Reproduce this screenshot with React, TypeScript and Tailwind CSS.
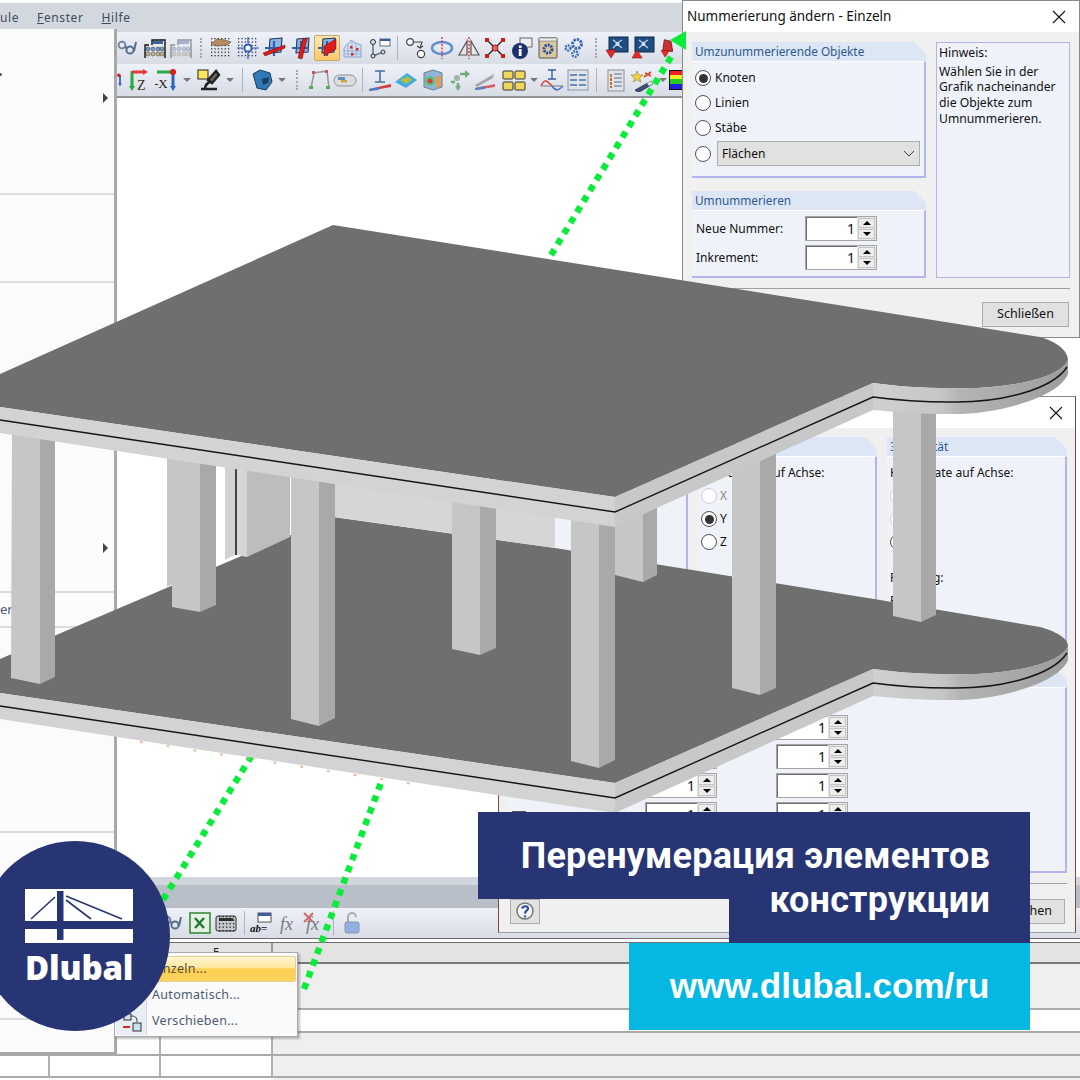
import React from 'react';

const UI = "font-['Noto_Sans',sans-serif]";

const Svg = ({ children }: { children: React.ReactNode }) => (
  <svg width="24" height="24" viewBox="0 0 24 24" fill="none">
    {children}
  </svg>
);

const dots = (from: number, to: number, step: number, fill: string) => {
  const out: React.ReactNode[] = [];
  for (let x = from; x <= to; x += step)
    for (let y = from; y <= to; y += step)
      out.push(<rect key={`${x}-${y}`} x={x} y={y} width="1.3" height="1.3" fill={fill} />);
  return out;
};

const Chain = () => (
  <Svg>
    <circle cx="6" cy="9" r="3.4" stroke="#6b7f93" strokeWidth="1.8" />
    <circle cx="14" cy="14" r="3.6" stroke="#54708c" strokeWidth="2" />
    <path d="M9 11l2 1M20 6l-2 9" stroke="#54708c" strokeWidth="2" />
  </Svg>
);
const Abacus = ({ faded }: { faded?: boolean }) => (
  <Svg>
    <g opacity={faded ? 0.4 : 1}>
      <path d="M2 22V9h4M22 22V4H9v5" stroke="#111" strokeWidth="1.4" />
      <rect x="10" y="5" width="10" height="3" fill="#3c62a0" />
      {[5, 10, 15, 19].map((x) => (
        <circle key={x} cx={x} cy="13" r="2" fill="#7b97c4" stroke="#333" strokeWidth="0.5" />
      ))}
      {[5, 10, 15, 19].map((x) => (
        <circle key={x} cx={x} cy="18" r="2" fill="#c9b98a" stroke="#333" strokeWidth="0.5" />
      ))}
    </g>
  </Svg>
);
const GridHand = () => (
  <Svg>
    {dots(2, 22, 3.4, '#333')}
    <path d="M2 8l6-5 8 1 6 2-4 3-10 1z" fill="#b98d63" stroke="#5d4630" strokeWidth="0.6" />
  </Svg>
);
const GridNode = () => (
  <Svg>
    {dots(2, 22, 3.4, '#2c3d66')}
    <circle cx="12" cy="12" r="3.6" stroke="#2b5bb0" strokeWidth="2" fill="#fff" />
    <path d="M1 12h6M17 12h6M12 1v6M12 17v6" stroke="#2b5bb0" strokeWidth="1.2" />
  </Svg>
);
const Plane = ({ k }: { k: number }) => (
  <Svg>
    <path d="M8 3l12-1-1 14-12 1z" fill="#8db4e2" stroke="#1d3557" strokeWidth="1.1" />
    <path d="M3 12h16M12 20V5" stroke="#2d62a8" strokeWidth="2.2" />
    {k === 0 && <path d="M1 17l22-8v3L3 20z" fill="#e01b1b" stroke="#5e0d0d" strokeWidth="0.5" />}
    {k === 1 && <path d="M9 22l5-20 4 1-5 20z" fill="#e01b1b" stroke="#5e0d0d" strokeWidth="0.5" />}
    {k === 2 && <path d="M9 10l12-7v10L9 20z" fill="#e01b1b" stroke="#5e0d0d" strokeWidth="0.5" />}
  </Svg>
);
const ActivePlane = () => (
  <span className="flex h-[26px] w-[26px] items-center justify-center rounded-[2px] border border-[#c9a86a] bg-gradient-to-b from-[#ffe9b0] to-[#ffc766]">
    <Plane k={2} />
  </span>
);
const RedGrid = () => (
  <Svg>
    <path d="M3 21V12l7-8 5 3 5 2v12z" fill="#cfe0f2" stroke="#7d9bc0" strokeWidth="0.8" />
    <path d="M3 15h17M3 18h17M7 8v13M11 5v16M15 7v14" stroke="#7d9bc0" strokeWidth="0.6" />
    <rect x="9" y="10" width="2.5" height="2.5" fill="#d22" />
    <rect x="15" y="12" width="2.5" height="2.5" fill="#d22" />
    <rect x="10" y="17" width="2.5" height="2.5" fill="#d22" />
  </Svg>
);
const NodeWin = () => (
  <Svg>
    <rect x="12" y="3" width="10" height="7" fill="#fff" stroke="#5c6a7a" />
    <rect x="12" y="3" width="10" height="2" fill="#3a5f92" />
    <path d="M5 9v11M5 20l10-4" stroke="#5e7892" strokeWidth="1.5" />
    <circle cx="5" cy="6" r="2.5" stroke="#333" fill="#cfe0f2" />
    <circle cx="5" cy="20" r="2" stroke="#333" fill="#cfe0f2" />
    <circle cx="15" cy="16" r="2" stroke="#333" fill="#cfe0f2" />
  </Svg>
);
const MoveNodes = () => (
  <Svg>
    <circle cx="6" cy="6" r="3.4" stroke="#444" strokeWidth="1.2" fill="#fff" />
    <circle cx="17" cy="18" r="3.6" stroke="#444" strokeWidth="1.2" fill="#fff" />
    <path d="M10 6h8l-2 6M13 10l3 2 3-2" stroke="#444" strokeWidth="1.1" />
  </Svg>
);
const RotEllipse = () => (
  <Svg>
    <ellipse cx="12" cy="12" rx="10" ry="6" stroke="#5b8fcf" strokeWidth="2.4" />
    <path d="M12 1v22" stroke="#e11" strokeWidth="1.2" strokeDasharray="2 1.5" />
  </Svg>
);
const Mirror = () => (
  <Svg>
    <path d="M10 5v14H2zM14 5v14h8z" stroke="#555" strokeWidth="1.2" fill="#e8e8e8" />
    <path d="M12 1v22" stroke="#e11" strokeWidth="1.2" strokeDasharray="2 1.5" />
  </Svg>
);
const RedX = () => (
  <Svg>
    <path d="M4 4l16 16M20 4L4 20" stroke="#222" strokeWidth="1.4" />
    {[
      [2, 2],
      [18, 2],
      [2, 18],
      [18, 18],
    ].map(([x, y]) => (
      <rect key={`${x}${y}`} x={x} y={y} width="4" height="4" fill="#d61a1a" />
    ))}
    <circle cx="12" cy="12" r="3" fill="#d66" stroke="#a11" />
  </Svg>
);
const Info = () => (
  <Svg>
    <rect x="10" y="2" width="12" height="9" fill="#eee" stroke="#666" />
    <circle cx="10" cy="15" r="8" fill="#1b2f6e" />
    <rect x="8.8" y="13" width="2.8" height="7" fill="#fff" />
    <rect x="8.8" y="9.5" width="2.8" height="2.4" fill="#fff" />
  </Svg>
);
const GearWin = () => (
  <Svg>
    <rect x="3" y="2" width="18" height="20" rx="1" fill="#d9c7a2" stroke="#555" />
    <rect x="3" y="2" width="18" height="3" fill="#eee" stroke="#555" strokeWidth="0.5" />
    <circle cx="12" cy="13" r="4" stroke="#2b4c96" strokeWidth="3" strokeDasharray="2 1" />
  </Svg>
);
const Gears = () => (
  <Svg>
    <circle cx="15" cy="8" r="4.5" stroke="#3f6bb5" strokeWidth="3" strokeDasharray="2.4 1" />
    <circle cx="6" cy="12" r="2.5" stroke="#3f6bb5" strokeWidth="2.4" strokeDasharray="1.8 1" />
    <circle cx="13" cy="18" r="2.8" stroke="#3f6bb5" strokeWidth="2.4" strokeDasharray="1.8 1" />
  </Svg>
);
const BlueTri = ({ up }: { up?: boolean }) => (
  <Svg>
    <rect x="4" y="1" width="19" height="15" fill="#1f4d80" stroke="#0e2a4a" />
    <path d="M8 4l4 3 5-3M8 12l4-4 5 4" stroke="#bcd7f0" strokeWidth="1.2" />
    <circle cx="12.5" cy="8" r="2" fill="#cfe3f6" />
    <path d={up ? 'M6 14l5 8H1z' : 'M1 14h10l-5 8z'} fill="#e8262a" stroke="#7a1414" strokeWidth="0.6" />
  </Svg>
);
const RedTri = () => (
  <Svg>
    <path d="M10 2l8 2 2 12H8z" fill="#c83232" stroke="#6d1818" />
    <path d="M6 15h10l-5 8z" fill="#e8262a" stroke="#7a1414" strokeWidth="0.6" />
  </Svg>
);
const AxisZ = ({ label }: { label: string }) => (
  <Svg>
    <path d="M4 3v17" stroke="#28a745" strokeWidth="3" />
    <path d="M1 18l3 5 3-5z" fill="#28a745" />
    <path d="M4 4h12" stroke="#e23a3a" strokeWidth="3" />
    <path d="M15 1l5 3-5 3z" fill="#e23a3a" />
    <text x="9" y="22" fontFamily="Liberation Serif" fontSize="14" fill="#333">
      {label}
    </text>
  </Svg>
);
const AxisX = () => (
  <Svg>
    <text x="-1" y="20" fontFamily="Liberation Serif" fontSize="13" fill="#222">
      -X
    </text>
    <path d="M2 4h14" stroke="#28a745" strokeWidth="3" />
    <path d="M18 4v15" stroke="#2a62c8" strokeWidth="3" />
    <path d="M15 18l3 5 3-5z" fill="#2a62c8" />
    <circle cx="18" cy="4" r="3" fill="#d82020" />
  </Svg>
);
const AxisBlue = () => (
  <Svg>
    <path d="M12 3v17" stroke="#2a62c8" strokeWidth="3" />
    <path d="M9 18l3 5 3-5z" fill="#2a62c8" />
    <circle cx="10" cy="4" r="3" fill="#d82020" />
  </Svg>
);
const Scope = () => (
  <Svg>
    <rect x="1" y="2" width="10" height="9" fill="#ffe85c" stroke="#222" />
    <path d="M19 3l-8 9 4 3 7-8zM4 21h16M8 21c0-4 2-6 5-7" stroke="#222" strokeWidth="2.4" fill="#666" />
  </Svg>
);
const Block = () => (
  <Svg>
    <path d="M3 6l7-4 10 3 2 9-6 8-9-2z" fill="#2f79b6" stroke="#173e60" />
    <path d="M12 11l7-2-1 6-5 2z" fill="#173e60" />
  </Svg>
);
const Frame = () => (
  <Svg>
    <path d="M4 20L7 5l13-2 2 17" stroke="#9b9b9b" strokeWidth="1.6" />
    <rect x="2" y="18" width="4" height="3" fill="#57a85f" />
    <rect x="19" y="18" width="4" height="3" fill="#57a85f" />
    <rect x="5" y="3" width="3" height="3" fill="#c55" />
    <rect x="18" y="2" width="3" height="3" fill="#c55" />
  </Svg>
);
const Pill = () => (
  <Svg>
    <rect x="1" y="7" width="22" height="11" rx="5.5" fill="#dcdcdc" stroke="#8f8f8f" />
    <rect x="5" y="9" width="7" height="3" fill="#5d8cc4" />
    <rect x="8" y="12" width="6" height="2.4" fill="#c9a24a" />
  </Svg>
);
const IBeam = () => (
  <Svg>
    <path d="M7 3h10M12 3v11M7 14h10" stroke="#4a6ea8" strokeWidth="1.6" />
    <path d="M1 21l22-5v3L1 23z" fill="#d23c3c" />
    <path d="M1 21l10-2v3L1 23z" fill="#4a7fd0" />
  </Svg>
);
const Rainbow = () => (
  <Svg>
    <path d="M1 14L13 5l10 7-11 8z" fill="#4aa8e0" />
    <path d="M6 12l7-4 6 4-7 4z" fill="#7ccf5b" />
    <path d="M9 12l4-2 3 2-4 2z" fill="#f2a33a" />
  </Svg>
);
const ColorCube = () => (
  <Svg>
    <path d="M3 5l9-3 9 3v14l-9 3-9-3z" fill="#8fb5d8" stroke="#6f7f8f" />
    <circle cx="9" cy="13" r="5" fill="#5fc07a" />
    <circle cx="9" cy="13" r="2.5" fill="#d63a3a" />
    <path d="M15 9l5-2v11l-5 2z" fill="#e0a050" />
  </Svg>
);
const GreenArrows = () => (
  <Svg>
    <circle cx="10" cy="10" r="3" fill="#9fb5a5" />
    <path d="M13 6h6M8 14H4M11 15v6" stroke="#6fae7c" strokeWidth="2.6" />
    <path d="M18 2l5 4-5 4zM8 18l3 5 3-5z" fill="#6fae7c" />
  </Svg>
);
const Plates = () => (
  <Svg>
    <path d="M2 17l19-11-1 4L4 19z" fill="#a7a7a7" />
    <path d="M2 20l20-4v3L2 22z" fill="#d86060" />
    <path d="M2 20l10-2v3L2 22z" fill="#5b7fc4" />
  </Svg>
);
const Yellows = () => (
  <Svg>
    {[
      [1, 3],
      [13, 3],
      [1, 14],
      [13, 14],
    ].map(([x, y]) => (
      <rect key={`${x}${y}`} x={x} y={y} width="10" height="8" rx="1" fill="#f2d65c" stroke="#333" />
    ))}
  </Svg>
);
const IBeamWave = () => (
  <Svg>
    <path d="M8 2h8M12 2v9M8 11h8" stroke="#3e5f9e" strokeWidth="1.4" />
    <path d="M1 18c4-9 7-4 11 0" stroke="#d44" strokeWidth="1.6" />
    <path d="M12 18c4 6 7 4 11 0" stroke="#3e6fd0" strokeWidth="1.6" />
    <path d="M1 18h22" stroke="#777" />
  </Svg>
);
const TableIco = () => (
  <Svg>
    <rect x="2" y="2" width="20" height="20" fill="#dfe3ea" stroke="#8d96a5" />
    <path d="M4 7h7M13 7h7M4 12h7M13 12h7M4 17h7M13 17h7" stroke="#4a70a8" strokeWidth="1.6" />
  </Svg>
);
const Doc = () => (
  <Svg>
    <rect x="4" y="2" width="16" height="21" fill="#e2e4e8" stroke="#8b8f96" />
    <path d="M7 6v14" stroke="#d06a2a" strokeWidth="2" strokeDasharray="3 1" />
    <path d="M10 6h8M10 10h8M10 14h8M10 18h8" stroke="#59708f" strokeWidth="1.2" />
  </Svg>
);
const StarPen = () => (
  <Svg>
    <path d="M6 3l1.7 4H12L8.6 10l1.2 4L6 11.6 2.3 14l1.2-4L0 7h4.3z" fill="#f0d53c" stroke="#7a6a1a" strokeWidth="0.5" />
    <path d="M14 5l6 3M20 4l-7 5" stroke="#d42" strokeWidth="1.6" />
    <path d="M4 22l16-9 2 3-15 9z" fill="#3b4f78" stroke="#111" strokeWidth="0.5" />
    <path d="M16 15l4-2 2 3-4 2z" fill="#ddd" />
  </Svg>
);
const RainbowBars = () => (
  <Svg>
    <rect x="0" y="2" width="24" height="20" fill="#111" />
    <rect x="1" y="3" width="22" height="4" fill="#e22" />
    <rect x="1" y="7" width="22" height="4" fill="#ee2" />
    <rect x="1" y="11" width="22" height="5" fill="#2c2" />
    <rect x="1" y="16" width="22" height="5" fill="#22d" />
  </Svg>
);
const Excel = () => (
  <Svg>
    <rect x="2" y="2" width="20" height="20" fill="#e4f2e4" stroke="#3c8a40" strokeWidth="1.6" />
    <path d="M7 7l9 10M16 7L7 17" stroke="#1f7a31" strokeWidth="2.4" />
  </Svg>
);
const Calc = () => (
  <Svg>
    <rect x="2" y="5" width="20" height="15" rx="2" fill="#c5c7cb" stroke="#333" />
    <rect x="5" y="7" width="14" height="3" fill="#333" />
    {dots(5, 19, 3.5, '#222')}
  </Svg>
);
const AbEq = () => (
  <Svg>
    <rect x="8" y="2" width="13" height="9" fill="#fff" stroke="#555" />
    <rect x="8" y="2" width="13" height="3" fill="#3e5f9e" />
    <text x="0" y="21" fontFamily="Liberation Serif" fontStyle="italic" fontWeight="700" fontSize="11" fill="#111">
      ab=
    </text>
  </Svg>
);
const Fx = ({ off }: { off?: boolean }) => (
  <Svg>
    <text x="3" y="19" fontFamily="Liberation Serif" fontStyle="italic" fontSize="18" fill="#77797e">
      fx
    </text>
    {off && <path d="M1 2l9 9M10 2l-9 9" stroke="#d76a6a" strokeWidth="2" />}
  </Svg>
);
const Lock = () => (
  <Svg>
    <path d="M8 11V6a4 4 0 018 0" stroke="#a8adb5" strokeWidth="2" />
    <rect x="5" y="11" width="14" height="11" rx="2" fill="#8fb0e0" stroke="#8a94a8" />
  </Svg>
);

const Caret = () => <span className="h-0 w-0 border-x-[4px] border-t-[4px] border-x-transparent border-t-[#777]" />;
const Sep = ({ w }: { w: string }) => (
  <span className={`flex justify-center ${w}`}>
    <span className="h-[24px] w-px bg-[#aeb3bc]" />
  </span>
);
const Grip = ({ w }: { w: string }) => (
  <span className={`flex justify-center ${w}`}>
    <span className="h-[20px] w-[2px] border-l-2 border-dotted border-[#a3a8b2]" />
  </span>
);
const Slot = ({ w = 'w-[26.4px]', children }: { w?: string; children: React.ReactNode }) => (
  <span className={`flex shrink-0 items-center justify-center ${w}`}>{children}</span>
);

const Toolbar = ({ className, children }: { className: string; children: React.ReactNode }) => (
  <div className={`flex shrink-0 items-center bg-gradient-to-b from-[#eef1f8] to-[#d8dce5] ${className}`}>
    {children}
  </div>
);

const Radio = ({ on, off }: { on?: boolean; off?: boolean }) => (
  <span
    className={`flex h-[16px] w-[16px] shrink-0 items-center justify-center rounded-full border-[1.5px] bg-white ${
      off ? 'border-[#cfcfcf]' : 'border-[#4f4f4f]'
    }`}
  >
    {on && <span className="h-[9px] w-[9px] rounded-full bg-[#333]" />}
  </span>
);

const Spinner = ({ className = '' }: { className?: string }) => (
  <div className={`flex h-[25px] w-[72px] shrink-0 border border-[#a6a6a6] bg-[#e6e6e6] ${className}`}>
    <div className="flex flex-1 items-center justify-end border-l border-t border-[#6f6f6f] bg-white pr-[2px] text-[14px] text-[#111]">
      1
    </div>
    <div className="flex w-[19px] flex-col gap-px p-px">
      <span className="flex flex-1 items-center justify-center border border-[#c4c4c4] bg-[#ececec]">
        <span className="h-0 w-0 border-x-[4px] border-b-[4px] border-x-transparent border-b-black" />
      </span>
      <span className="flex flex-1 items-center justify-center border border-[#c4c4c4] bg-[#ececec]">
        <span className="h-0 w-0 border-x-[4px] border-t-[4px] border-x-transparent border-t-black" />
      </span>
    </div>
  </div>
);

const Group = ({ title, className, children }: { title: string; className: string; children?: React.ReactNode }) => (
  <div className={`flex flex-col ${className}`}>
    <div className="flex h-[19px] shrink-0 items-center bg-[#dce6f4] pl-[3px] text-[11.8px] text-[#2f5a8c] [clip-path:polygon(0_0,calc(100%-12px)_0,100%_12px,100%_100%,0_100%)]">
      {title}
    </div>
    <div className="flex-1 border-b-2 border-r-2 border-t border-[#b3b3ee] border-t-white bg-[#eff3f9] text-[12px] leading-[16px] text-[#111]">
      {children}
    </div>
  </div>
);

const CloseX = () => (
  <svg width="14" height="14" viewBox="0 0 14 14" stroke="#111" strokeWidth="1.1">
    <path d="M1 1l12 12M13 1L1 13" />
  </svg>
);

const Btn = ({ className, children }: { className: string; children: React.ReactNode }) => (
  <div className={`flex h-[25px] items-center justify-center border border-[#adadad] bg-[#e1e1e1] text-[12.5px] text-[#111] ${className}`}>
    {children}
  </div>
);

const RenumberDialog = () => (
  <div className={`absolute left-[682px] top-0 flex h-[338px] w-[398px] flex-col border border-[#8a8a8a] bg-[#f0f0f0] ${UI}`}>
    <div className="flex h-[31px] shrink-0 items-center justify-between bg-white pl-[4px] pr-[13px] text-[13.5px] text-[#111]">
      <span>Nummerierung ändern - Einzeln</span>
      <CloseX />
    </div>
    <div className="flex gap-[10px] pl-[9px] pt-[10px]">
      <div className="flex w-[234px] flex-col gap-[13px]">
        <Group title="Umzunummerierende Objekte" className="h-[136px]">
          <div className="flex flex-col gap-[9px] pl-[3px] pt-[8px]">
            {['Knoten', 'Linien', 'Stäbe'].map((t, i) => (
              <div key={t} className="flex items-center gap-[4px]">
                <Radio on={i === 0} />
                {t}
              </div>
            ))}
            <div className="-mt-[4px] flex items-center gap-[6px]">
              <Radio />
              <div className="flex h-[25px] w-[203px] items-center justify-between border border-[#adadad] bg-[#e1e1e1] pl-[4px] pr-[4px]">
                Flächen
                <svg width="12" height="8" viewBox="0 0 12 8" stroke="#444" fill="none">
                  <path d="M1 1l5 5 5-5" />
                </svg>
              </div>
            </div>
          </div>
        </Group>
        <Group title="Umnummerieren" className="h-[87px]">
          <div className="flex flex-col gap-[4px] pl-[4px] pt-[5px]">
            <div className="flex items-center justify-between pr-[47px]">
              Neue Nummer:
              <Spinner />
            </div>
            <div className="flex items-center justify-between pr-[47px]">
              Inkrement:
              <Spinner />
            </div>
          </div>
        </Group>
      </div>
      <div className="h-[236px] w-[134px] border border-[#b3b3ee] bg-[#eff3f9] pl-[2px] pt-[2px] text-[12.2px] leading-[15.7px] text-[#111]">
        <div className="mb-[3px]">Hinweis:</div>
        Wählen Sie in der
        <br />
        Grafik nacheinander
        <br />
        die Objekte zum
        <br />
        Umnummerieren.
      </div>
    </div>
    <div className="ml-[8px] mt-[10px] h-px w-[379px] bg-[#a0a0a0]" />
    <div className="flex justify-end pr-[10px] pt-[13px]">
      <Btn className="w-[87px]">Schließen</Btn>
    </div>
  </div>
);

const CoordDialog = () => (
  <div className={`absolute left-[498px] top-[396px] flex h-[537px] w-[578px] flex-col border border-x-[#7a4a4a] border-t-[#8a8a8a] border-b-[#a0a0a0] bg-[#f0f0f0] ${UI}`}>
    <div className="flex h-[31px] shrink-0 items-center justify-end bg-white pr-[12px]">
      <CloseX />
    </div>
    <div className="flex gap-[10px] pl-[9px] pt-[9px]">
      <Group title="1. Priorität" className="h-[222px] w-[180px]" />
      <Group title="2. Priorität" className="h-[222px] w-[179px]">
        <div className="flex flex-col gap-[7px] pl-[3px] pt-[8px]">
          <div>Koordinate auf Achse:</div>
          {['X', 'Y', 'Z'].map((t, i) => (
            <div key={t} className={`flex items-center gap-[3px] ${i === 0 ? 'text-[#8a8a8a]' : ''}`}>
              <Radio on={i === 1} off={i === 0} />
              {t}
            </div>
          ))}
        </div>
      </Group>
      <Group title="3. Priorität" className="h-[222px] w-[180px]">
        <div className="flex flex-col gap-[7px] pl-[3px] pt-[8px]">
          <div>Koordinate auf Achse:</div>
          <Radio off />
          <Radio off />
          <Radio />
          <div className="mt-[13px]">Richtung:</div>
          <div>Positiv</div>
        </div>
      </Group>
    </div>
    <div className="pl-[9px] pt-[9px]">
      <Group title="Objekte" className="h-[205px] w-[559px]">
        <div className="flex flex-col gap-[4px] pt-[27px]">
          {['Knoten', 'Linien', 'Stäbe', 'Flächen'].map((t, i) => (
            <div key={t} className="flex items-center pl-[4px] pr-[217px]">
              <span className="mr-[4px] mt-[6px] h-[14px] w-[14px] border border-[#555] bg-white" />
              <span className="mt-[6px] flex-1">{i === 3 ? 'Stäbe' : t}</span>
              <Spinner className="mr-[59px]" />
              <Spinner />
            </div>
          ))}
        </div>
      </Group>
    </div>
    <div className="ml-[11px] mt-[10px] h-px w-[557px] bg-[#a0a0a0]" />
    <div className="flex items-center justify-between pl-[11px] pr-[10px] pt-[15px]">
      <Btn className="w-[30px]">
        <svg width="22" height="22" viewBox="0 0 22 22">
          <circle cx="11" cy="10" r="8" fill="#f5f5f5" stroke="#777" strokeWidth="1.5" />
          <path d="M8 7.5c1-3 6-3 6 0 0 2.5-3 2-3 5M11 14.5v2" stroke="#2a4d9b" strokeWidth="2.2" fill="none" />
        </svg>
      </Btn>
      <Btn className="w-[90px]">Abbrechen</Btn>
    </div>
  </div>
);

const LeftMenu = () => (
  <div className={`absolute left-0 top-[29px] flex h-[1026px] w-[117px] flex-col border-b-[3px] border-r-[3px] border-[#a8a8a8] bg-[#fbfbfb] text-[13px] text-[#4a5a78] ${UI}`}>
    <div className="relative h-[166px] border-b-2 border-[#dcdcdc]">
      <span className="absolute left-[-1px] top-[44px] h-[3px] w-[3px] rounded-full bg-[#4a5a78]" />
      <span className="absolute left-[103px] top-[64px] h-0 w-0 border-y-[5px] border-l-[5px] border-y-transparent border-l-[#444]" />
    </div>
    <div className="h-[88px] border-b-2 border-[#dcdcdc]" />
    <div className="relative h-[310px] border-b-2 border-[#dcdcdc]">
      <span className="absolute left-[103px] top-[260px] h-0 w-0 border-y-[5px] border-l-[5px] border-y-transparent border-l-[#444]" />
    </div>
    <div className="flex h-[35px] items-center border-b-2 border-[#dcdcdc]">er</div>
    <div className="h-[205px] border-b-2 border-[#dcdcdc]" />
    <div className="h-[187px] border-b-2 border-[#dcdcdc]" />
  </div>
);

const ContextMenu = () => (
  <div className={`absolute left-[114px] top-[952px] flex h-[85px] w-[184px] border border-[#a9a9a9] bg-[#fafafa] p-px text-[12.5px] tracking-[0.3px] text-[#4a5a72] shadow-[2px_2px_2px_rgba(0,0,0,0.25)] ${UI}`}>
    <div className="relative flex flex-1 flex-col pt-[2px]">
      <div className="absolute inset-y-0 left-0 w-[31px] border-r border-[#d6dbe3] bg-[#e9eef5]" />
      <div className="relative flex h-[26px] shrink-0 items-center rounded-[2px] border border-[#e8cf8f] bg-[linear-gradient(#fff6d0,#ffe79c_45%,#ffcf50_50%,#fdd25f)] pl-[35px] text-[#50503c]">
        Einzeln...
      </div>
      <div className="relative flex h-[26px] shrink-0 items-center pl-[36px]">Automatisch...</div>
      <div className="relative flex h-[26px] shrink-0 items-center pl-[36px]">Verschieben...</div>
      <svg className="absolute left-[6px] top-[59px]" width="20" height="20" viewBox="0 0 20 20" fill="none">
        <rect x="2" y="1" width="7" height="6" fill="#cfe0f2" stroke="#333" />
        <rect x="11" y="10" width="8" height="8" fill="#cfe0f2" stroke="#333" />
        <path d="M9 3c4 0 6 1 6 6" stroke="#333" />
        <path d="M1 14h7" stroke="#d22" strokeWidth="2" />
      </svg>
    </div>
  </div>
);

const Slab = ({ top, dy, id }: { top: string; dy: number; id: string }) => (
  <>
    <path d={top} fill="#6f6f6f" />
    <g transform={`translate(0 ${dy})`}>
      <path d="M0 407L615 497V527L0 433Z" fill="#d3d3d3" />
      <path d="M615 497L873 383V410L615 527Z" fill="#c8c8c8" />
      <path d="M873 383C895 386 920 388 950 388C1000 390 1060 380 1068 360V374C1060 396 1000 415 950 414C920 414 895 412 873 410Z" fill={`url(#${id})`} />
      <path d="M0 420L615 512L873 397C895 400 920 402 950 402C1000 403 1052 390 1067 367" stroke="#151515" strokeWidth="1.4" fill="none" />
    </g>
  </>
);

const Column = ({ pts }: { pts: number[] }) => {
  const [xl, xb, xm, xr, top, bl, bm, br] = pts;
  return (
    <>
      <path d={`M${xl} ${top}H${xm}V${bm}L${xb} ${bl}Z`} fill="#c6c6c6" />
      <path d={`M${xm} ${top}H${xr}V${br}L${xm} ${bm}Z`} fill="#a9a9a9" />
    </>
  );
};

// Green markers and the 3D model lying over the windows
const Model = () => (
  <svg className="absolute left-0 top-0" width="1080" height="1080" viewBox="0 0 1080 1080" fill="none">
    <defs>
      <linearGradient id="roundA" gradientUnits="userSpaceOnUse" x1="873" y1="0" x2="1068" y2="0">
        <stop offset="0" stopColor="#d0d0d0" />
        <stop offset="0.35" stopColor="#c6c6c6" />
        <stop offset="0.45" stopColor="#b4b4b4" />
        <stop offset="1" stopColor="#9c9c9c" />
      </linearGradient>
    </defs>
    <g stroke="#0bec3a" strokeWidth="6.5" strokeDasharray="6.5 6">
      <path d="M671 57L545 265" />
      <path d="M150 921L252 755" />
      <path d="M304 989L382 780" />
    </g>
    <path d="M670 40L686 31V50Z" fill="#0bec3a" />
    <path d="M140 742L420 785" stroke="#e3a27e" strokeWidth="2" strokeDasharray="3 24" opacity="0.7" />
    <Slab
      dy={286}
      id="roundA"
      top="M0 659L333 517L555 548L880 600L1040 627C1055 631 1068 638 1068 646C1060 666 1000 676 950 674C920 674 895 672 873 669L615 783L0 693Z"
    />
    <path d="M225 465H235V555L225 560Z" fill="#d2d2d2" />
    <path d="M235 465H237V555H235Z" fill="#444" />
    <path d="M237 465H247V557L237 555Z" fill="#d6d6d6" />
    <path d="M247 465H290V537L247 557Z" fill="#bdbdbd" />
    <path d="M335 480H555V548L335 517Z" fill="#d6d6d6" />
    <path d="M167 450H173V584L167 587Z" fill="#c6c6c6" />
    <Column pts={[615, 615, 643, 657, 500, 575, 582, 575]} />
    <Column pts={[12, 11, 40, 55, 430, 678, 684, 677]} />
    <Column pts={[172, 172, 200, 216, 450, 607, 612, 605]} />
    <Column pts={[291, 291, 319, 335, 470, 719, 726, 718]} />
    <Column pts={[452, 452, 480, 496, 490, 649, 655, 648]} />
    <Column pts={[571, 571, 599, 615, 510, 761, 768, 760]} />
    <Column pts={[732, 732, 760, 776, 450, 688, 695, 688]} />
    <Column pts={[893, 893, 921, 936, 395, 616, 622, 615]} />
    <Slab
      dy={0}
      id="roundA"
      top="M0 374L333 225L1040 337C1055 341 1068 350 1068 360C1060 380 1000 390 950 388C920 388 895 386 873 383L615 497L0 407Z"
    />
  </svg>
);

const Logo = () => (
  <div className="absolute left-[-20px] top-[841px] flex h-[190px] w-[190px] flex-col rounded-full bg-[#283574] pl-[45px] pt-[48px]">
    <svg width="108" height="54" viewBox="25 889 108 54" fill="none">
      <path d="M25 889H133V921H25ZM25 929H133V943H25Z" fill="#fff" />
      <path d="M57 891H63.5V940H57Z" fill="#283574" />
      <path d="M55 897L31 919M66 896L122 919M66 900L91 919" stroke="#283574" strokeWidth="1.6" />
    </svg>
    <div className="mt-[4px] font-['Open_Sans',sans-serif] text-[33px] font-extrabold leading-[42px] tracking-[-0.2px] text-white">Dlubal</div>
  </div>
);

const Banner = () => (
  <div className="absolute left-[478px] top-[812px] flex w-[552px] flex-col items-end font-['Roboto',sans-serif] font-bold text-white">
    <div className="flex h-[87px] w-full items-center justify-end bg-[#283574] pr-[40px] pt-[1px] text-[36px] tracking-[0.2px]">
      Перенумерация элементов
    </div>
    <div className="flex h-[44px] w-[301px] justify-end bg-[#283574] pr-[40px] text-[36px] tracking-[0.2px]">
      <span className="-mt-[22px] leading-[46px]">конструкции</span>
    </div>
    <div className="flex h-[87px] w-[401px] items-center justify-center bg-[#05b8e3] font-['Liberation_Sans',sans-serif] text-[35px]">
      www.dlubal.com/ru
    </div>
  </div>
);

const rows = [
  { h: 'h-[46px]', fill: 'bg-[#efefef]' },
  { h: 'h-[23px]', fill: 'bg-white' },
  { h: 'h-[23px]', fill: 'bg-[#efefef]' },
  { h: 'h-[22px]', fill: 'bg-[#efefef]' },
];

export default function App() {
  return (
    <div className="relative h-[1080px] w-[1080px] overflow-hidden bg-white">
      <div className={`flex h-[1080px] flex-col ${UI}`}>
        <div className="h-[3px] shrink-0 bg-white" />
        <div className="flex h-[29px] shrink-0 items-center gap-[18px] bg-[#d3d7de] text-[12px] tracking-[0.6px] text-[#3d4b5e]">
          <span>ule</span>
          <span>
            <u>F</u>enster
          </span>
          <span>
            <u>H</u>ilfe
          </span>
        </div>
        <Toolbar className="h-[32px] pl-[115px]">
          <Slot><Chain /></Slot>
          <Slot><Abacus /></Slot>
          <Slot><Abacus faded /></Slot>
          <Grip w="w-[14px]" />
          <Slot><GridHand /></Slot>
          <Slot><GridNode /></Slot>
          <Slot><Plane k={0} /></Slot>
          <Slot><Plane k={1} /></Slot>
          <Slot><ActivePlane /></Slot>
          <Slot><RedGrid /></Slot>
          <Slot><NodeWin /></Slot>
          <Sep w="w-[10px]" />
          <Slot><MoveNodes /></Slot>
          <Slot><RotEllipse /></Slot>
          <Slot><Mirror /></Slot>
          <Slot><RedX /></Slot>
          <Slot><Info /></Slot>
          <Slot><GearWin /></Slot>
          <Slot><Gears /></Slot>
          <Grip w="w-[16px]" />
          <Slot><BlueTri /></Slot>
          <Slot><BlueTri up /></Slot>
          <Slot w="w-[20px]"><RedTri /></Slot>
        </Toolbar>
        <Toolbar className="h-[32px] pl-[113px]">
          <Slot w="w-[14px]"><AxisBlue /></Slot>
          <Slot w="w-[26px]"><AxisZ label="Z" /></Slot>
          <Slot w="w-[27px]"><AxisX /></Slot>
          <Slot w="w-[14px]"><Caret /></Slot>
          <Slot w="w-[30px]"><Scope /></Slot>
          <Slot w="w-[12px]"><Caret /></Slot>
          <Sep w="w-[12px]" />
          <Slot w="w-[28px]"><Block /></Slot>
          <Slot w="w-[12px]"><Caret /></Slot>
          <Grip w="w-[18px]" />
          <Slot w="w-[26px]"><Frame /></Slot>
          <Slot w="w-[26px]"><Pill /></Slot>
          <Sep w="w-[8px]" />
          <Slot w="w-[27px]"><IBeam /></Slot>
          <Slot><Rainbow /></Slot>
          <Slot><ColorCube /></Slot>
          <Slot><GreenArrows /></Slot>
          <Slot><Plates /></Slot>
          <Slot w="w-[30px]"><Yellows /></Slot>
          <Slot w="w-[10px]"><Caret /></Slot>
          <Slot w="w-[26px]"><IBeamWave /></Slot>
          <Slot w="w-[26px]"><TableIco /></Slot>
          <Sep w="w-[12px]" />
          <Slot w="w-[26px]"><Doc /></Slot>
          <Slot w="w-[28px]"><StarPen /></Slot>
          <Slot w="w-[12px]"><Caret /></Slot>
          <Slot w="w-[24px]"><RainbowBars /></Slot>
        </Toolbar>
        <div className="h-[2px] shrink-0 bg-[#8f9297]" />
        <div className="flex-1 bg-white" />
        <div className="h-[8px] shrink-0 bg-[#d1d5dc]" />
        <div className="h-[23px] shrink-0 bg-[#b8bfc9]" />
        <Toolbar className="h-[30px] pl-[160px]">
          <Slot><Chain /></Slot>
          <Slot><Excel /></Slot>
          <Slot><Calc /></Slot>
          <Sep w="w-[10px]" />
          <Slot><AbEq /></Slot>
          <Slot><Fx /></Slot>
          <Slot><Fx off /></Slot>
          <Sep w="w-[10px]" />
          <Slot><Lock /></Slot>
        </Toolbar>
        <div className="h-[5px] shrink-0 border-y border-[#6e6e6e] bg-white" />
        <div className="flex h-[21px] shrink-0 border-b-2 border-[#7a7a7a] bg-[#e3e3e3]">
          <div className="relative w-[273px] border-r-2 border-[#9a9a9a]">
            <span className="absolute left-[213px] top-[3px] text-[11px] leading-none text-[#222]">E</span>
          </div>
        </div>
        {rows.map((r) => (
          <div key={r.h + r.fill} className={`flex shrink-0 border-b-2 border-[#ababab] ${r.h}`}>
            <div className="w-[50px] border-r-2 border-[#b0b0b0] bg-white" />
            <div className="w-[111px] border-r-2 border-[#b0b0b0] bg-white" />
            <div className="w-[112px] border-r-2 border-[#b0b0b0] bg-white" />
            <div className={`flex-1 ${r.fill}`} />
          </div>
        ))}
        <div className="flex h-[2px] shrink-0">
          <div className="w-[273px] bg-white" />
          <div className="flex-1 bg-[#efefef]" />
        </div>
      </div>
      <LeftMenu />
      <ContextMenu />
      <CoordDialog />
      <RenumberDialog />
      <Model />
      <Logo />
      <Banner />
    </div>
  );
}
